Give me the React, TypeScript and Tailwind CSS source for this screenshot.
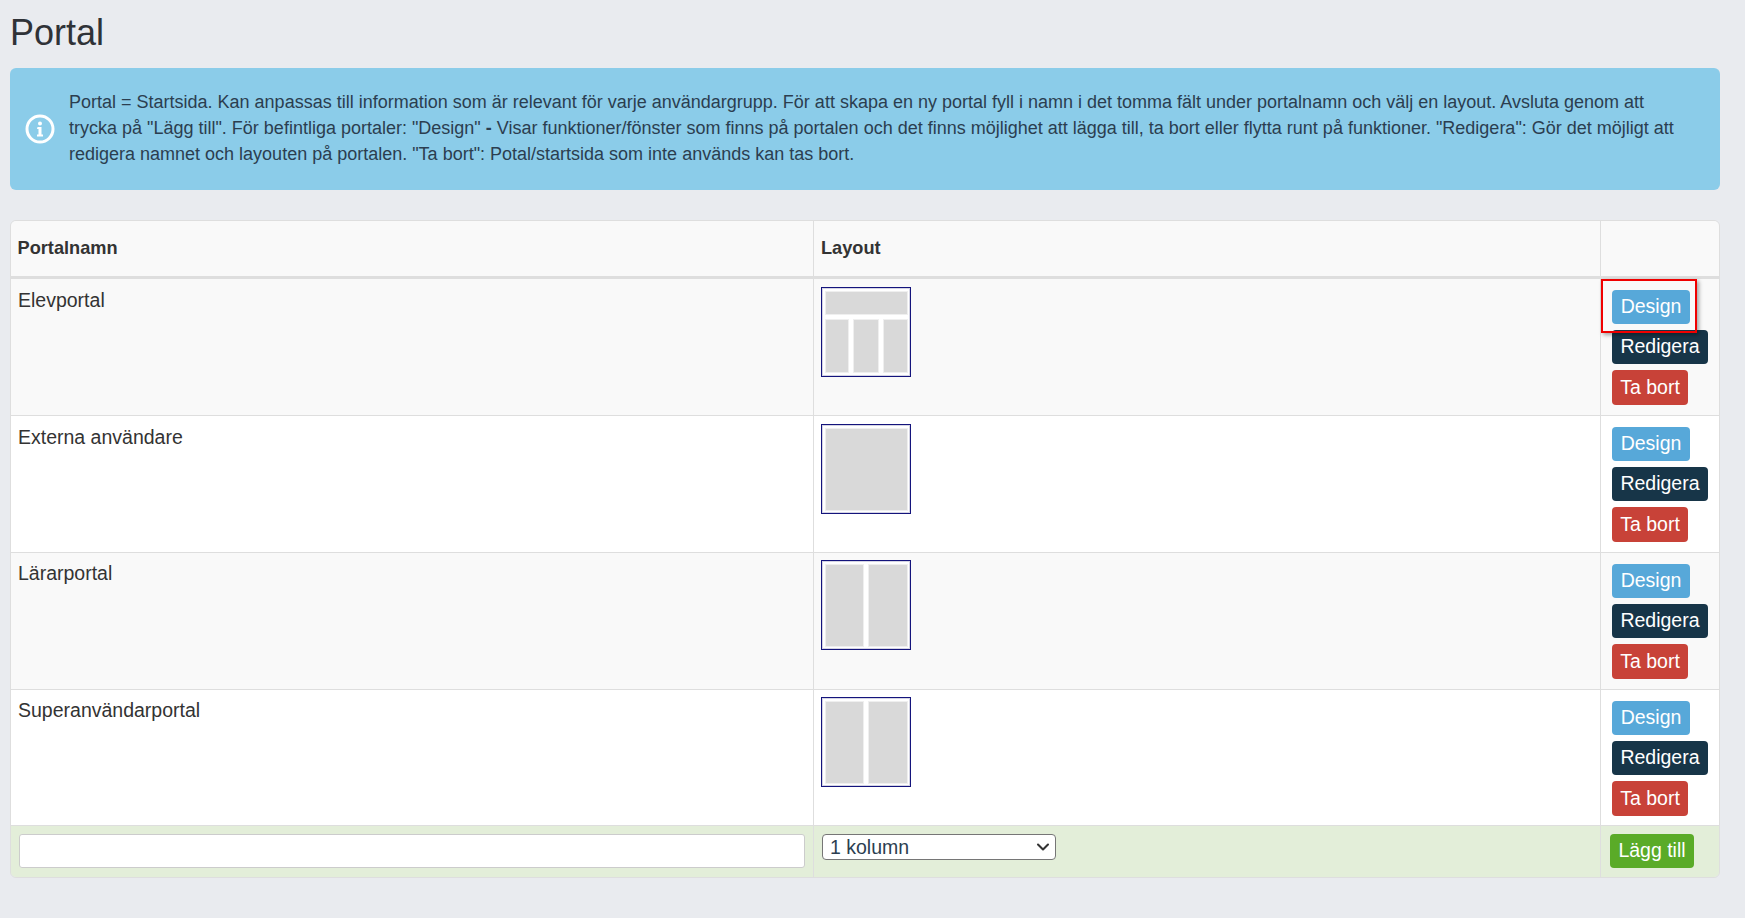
import React from 'react';
import { ChevronDown } from 'lucide-react';

function LayoutThumb({ type }: { type: 'three' | 'one' | 'two' }) {
  const block = 'bg-[#d9d9d9] shadow-[0_0_0_1px_#efefef]';
  return (
    <div className="w-[90px] h-[90px] border border-[#14147c] bg-white pl-[4px] pt-[4px] outline-1 -outline-offset-2 outline-[#d4d4e4]">
      {type === 'three' && (
        <div className="grid grid-cols-[22px_24px_23px] gap-[6px]">
          <div className={`col-span-3 h-[22px] ${block}`} />
          <div className={`h-[52px] ${block}`} />
          <div className={`h-[52px] ${block}`} />
          <div className={`h-[52px] ${block}`} />
        </div>
      )}
      {type === 'one' && <div className={`w-[81px] h-[81px] ${block}`} />}
      {type === 'two' && (
        <div className="grid grid-cols-[37px_38px] gap-[6px]">
          <div className={`h-[81px] ${block}`} />
          <div className={`h-[81px] ${block}`} />
        </div>
      )}
    </div>
  );
}

function RowButtons({ highlight }: { highlight?: boolean }) {
  return (
    <div className="relative flex flex-col items-start gap-[6px] pt-[1px]">
      <button className="h-[34px] w-[78px] rounded-[4px] bg-[#57a8d9] text-white">Design</button>
      <button className="h-[34px] w-[96px] rounded-[4px] bg-[#173548] text-white">Redigera</button>
      <button className="h-[35px] w-[76px] rounded-[4px] bg-[#c84238] text-white">Ta bort</button>
      {highlight && (
        <div className="absolute left-[-11px] top-[-10px] w-[96px] h-[54px] border-[2px] border-[#f00000] shadow-[2px_2px_4px_rgba(0,0,0,0.35)]" />
      )}
    </div>
  );
}

const rows: { name: string; layout: 'three' | 'one' | 'two'; alt: boolean; height: string; textPad: string; thumbPad: string }[] = [
  { name: 'Elevportal', layout: 'three', alt: true, height: 'h-[138px]', textPad: 'pt-[9px]', thumbPad: 'pt-[8px]' },
  { name: 'Externa användare', layout: 'one', alt: false, height: 'h-[137px]', textPad: 'pt-[9px]', thumbPad: 'pt-[8px]' },
  { name: 'Lärarportal', layout: 'two', alt: true, height: 'h-[137px]', textPad: 'pt-[8px]', thumbPad: 'pt-[7px]' },
  { name: 'Superanvändarportal', layout: 'two', alt: false, height: 'h-[136px]', textPad: 'pt-[8px]', thumbPad: 'pt-[7px]' },
];

export default function App() {
  return (
    <div className="min-h-[918px] bg-[#e9ebef] px-[10px] pt-[11px] font-['Liberation_Sans',Arial,sans-serif] text-[19.500px] leading-[25px] text-[#333333]">
      <h1 className="text-[36px] leading-[44px] font-normal text-[#2f3237] mb-[13px]">Portal</h1>

      {/* Info box */}
      <div className="w-[1710px] h-[122px] flex items-center rounded-[6px] bg-[#8bcce9] pl-[15px] pr-[34px]">
        <svg width="30" height="30" viewBox="0 0 30 30" className="shrink-0" fill="none">
          <circle cx="15" cy="15" r="13" stroke="#ffffff" strokeWidth="3" />
          <circle cx="15" cy="9.5" r="2" fill="#ffffff" />
          <path d="M12.5 13h4v7.500h1.500v2h-6v-2h1.500v-5.500h-1.500z" fill="#ffffff" />
        </svg>
        <p className="ml-[14px] pb-[2px] text-[18px] leading-[26px] text-[#2b3e50]">
          Portal = Startsida. Kan anpassas till information som är relevant för varje användargrupp. För att skapa en ny portal fyll i namn i det tomma fält under portalnamn och välj en layout. Avsluta genom att trycka på "Lägg till". För befintliga portaler: "Design" <b>-</b> Visar funktioner/fönster som finns på portalen och det finns möjlighet att lägga till, ta bort eller flytta runt på funktioner. "Redigera": Gör det möjligt att redigera namnet och layouten på portalen. "Ta bort": Potal/startsida som inte används kan tas bort.
        </p>
      </div>

      {/* Portal table */}
      <div className="mt-[30px] -ml-[0.5px] w-[1710px] rounded-[6px] border border-[#dedede] overflow-hidden">
        <table className="w-full table-fixed border-collapse">
          <colgroup>
            <col className="w-[803px]" />
            <col className="w-[787px]" />
            <col />
          </colgroup>
          <thead>
            <tr className="h-[56px] bg-[#f9f9f9] border-b-[3px] border-[#dedede] text-[18.200px]">
              <th className="px-[7px] text-left font-bold">Portalnamn</th>
              <th className="px-[7px] text-left font-bold border-l border-[#dedede]">Layout</th>
              <th className="border-l border-[#dedede]" />
            </tr>
          </thead>
          <tbody>
            {rows.map(row => (
              <tr key={row.name} className={`border-b border-[#dedede] ${row.alt ? 'bg-[#f9f9f9]' : 'bg-white'}`}>
                <td className={`${row.height} ${row.textPad} pl-[7.500px] pr-[7px] align-top`}>{row.name}</td>
                <td className={`${row.thumbPad} px-[7px] align-top border-l border-[#dedede]`}>
                  <LayoutThumb type={row.layout} />
                </td>
                <td className="pl-[11px] pt-[10px] align-top border-l border-[#dedede]">
                  <RowButtons highlight={row.name === 'Elevportal'} />
                </td>
              </tr>
            ))}
            <tr className="h-[52px] bg-[#e3eed9]">
              <td className="px-[8px] pb-[1px] align-middle">
                <input type="text" className="block w-full h-[34px] rounded-[3px] border border-[#cccccc] bg-white" />
              </td>
              <td className="px-[8px] pb-[9px] align-middle border-l border-[#dedede]">
                <div className="relative w-[234px]">
                  <select className="block w-full h-[26px] appearance-none rounded-[4px] border border-[#767676] bg-white pl-[7px] text-[#2c3e50]">
                    <option>1 kolumn</option>
                  </select>
                  <ChevronDown size={20} strokeWidth={2.5} className="absolute right-[3px] top-[3px] text-[#333333] pointer-events-none" />
                </div>
              </td>
              <td className="pl-[9px] pb-[1px] align-middle border-l border-[#dedede]">
                <button className="h-[34px] w-[84px] rounded-[4px] bg-[#5aab28] text-white">Lägg till</button>
              </td>
            </tr>
          </tbody>
        </table>
      </div>
    </div>
  );
}
